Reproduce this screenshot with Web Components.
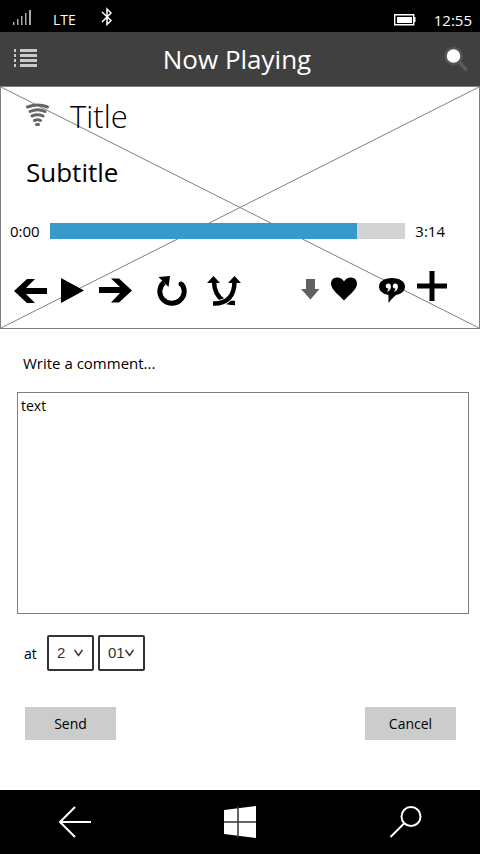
<!DOCTYPE html>
<html lang="en">
<head>
<meta charset="utf-8">
<meta name="viewport" content="width=device-width, initial-scale=1">
<title>Now Playing</title>
<style>
html, body { margin: 0; height: 100%; background: #fff; }
body { font-family: "Open Sans", "Noto Sans", sans-serif; font-size: 14px; line-height: 20px; color: #000; }
</style>
</head>
<body>
<phone-screen>
  <status-bar slot="top" network="LTE" time="12:55"></status-bar>
  <app-header slot="top">Now Playing</app-header>
  <media-player elapsed="0:00" total="3:14" value="307" max="355">
    <span slot="title">Title</span>
    <span slot="subtitle">Subtitle</span>
  </media-player>
  <comment-form></comment-form>
  <nav-bar slot="bottom"></nav-bar>
</phone-screen>
<script>
const define = (name, html, setup) => customElements.define(name, class extends HTMLElement {
  constructor() {
    super();
    this.attachShadow({ mode: 'open' }).innerHTML =
      '<style>*{box-sizing:border-box}svg{display:block}button{margin:0;padding:0;border:0;background:none;font:inherit;color:inherit;display:block}</style>' + html;
  }
  connectedCallback() { if (setup) setup(this, this.shadowRoot); }
});

define('phone-screen', `
<style>
:host { display: flex; flex-direction: column; min-height: 100vh; }
main { flex: 1; display: flex; flex-direction: column; }
</style>
<slot name="top"></slot><main><slot></slot></main><slot name="bottom"></slot>`);

define('status-bar', `
<style>
:host { display: block; background: #000; color: #fff; }
.bar { display: flex; justify-content: space-between; height: 32px; padding: 0 8px 0 12px; }
.group { display: flex; align-items: center; gap: 21px; }
.end { gap: 18px; }
.text { padding-top: 7px; line-height: 20px; }
.time { font-size: 15px; }
.bt { margin-left: 4px; }
</style>
<div class="bar">
  <div class="group">
    <svg width="20" height="32" viewBox="0 0 20 32" fill="#aaa"><path d="M1 22h1.500v3H1zM5 19h1.500v6H5zM9 16h1.500v9H9zM13 13h1.500v12H13zM17 10h2v15h-2z"/></svg>
    <span class="text net"></span>
    <svg class="bt" width="12" height="32" viewBox="0 0 12 32" fill="none" stroke="#fff" stroke-width="1.500"><path d="M1 12l9 8.500-4 4V9l4 4-9 9"/></svg>
  </div>
  <div class="group end">
    <svg width="22" height="32" viewBox="0 0 22 32"><path d="M.7 14.700h19v10h-19z" fill="none" stroke="#fff" stroke-width="1.400"/><path d="M3 17h15v6H3zM20 17h1.500v5H20z" fill="#fff"/></svg>
    <span class="text time"></span>
  </div>
</div>`, (el, root) => {
  root.querySelector('.net').textContent = el.getAttribute('network');
  root.querySelector('.time').textContent = el.getAttribute('time');
});

define('app-header', `
<style>
:host { display: block; background: #404040; color: #fff; }
header { display: flex; align-items: center; justify-content: space-between; height: 54px; padding: 0 11px 0 13px; }
h1 { margin: 0; font-size: 26px; font-weight: 400; line-height: 34px; }
.search { padding-left: 8px; }
</style>
<header>
  <button aria-label="Menu"><svg width="25" height="22" viewBox="0 0 25 22" fill="#c8cac8"><path d="M1 1h2v3H1zM7 1h17v3H7zM1 6h2v3H1zM7 6h17v3H7zM1 11h2v3H1zM7 11h17v3H7zM1 16h2v3H1zM7 16h17v3H7z"/></svg></button>
  <h1><slot></slot></h1>
  <button class="search" aria-label="Search"><svg width="25" height="26" viewBox="0 0 25 26"><path d="M14.500 15.500l7 7.500" stroke="#5a5a5a" stroke-width="4" stroke-linecap="round"/><circle cx="9.500" cy="10" r="8" fill="#fff" stroke="#565656" stroke-width="2.500"/></svg></button>
</header>`);

define('icon-button', `
<style>:host { display: block; } button { height: 36px; }</style>
<button></button>`, (el, root) => {
  const icons = {
    back: [33, '<path d="M0 20L13 8h8l-9 9h21v6H12l9 9h-8z"/>'],
    play: [24, '<path d="M0 7l23 12.500L0 32z"/>'],
    next: [33, '<path d="M33 19.500L20 7.500h-8l9 8.500H0v6h21l-9 9.500h8z"/>'],
    repeat: [30, '<path d="M7 11.500A12.200 11.800 0 1 0 24.500 13" fill="none" stroke="#000" stroke-width="5"/><path d="M1.500 6L13 5l-1.500 11z"/><circle cx="24" cy="13" r="2.500"/>'],
    shuffle: [34, '<path d="M7 10Q7 24 17 30Q20 32 28 32" fill="none" stroke="#000" stroke-width="4.500"/><path d="M6 32.500Q27.500 33 27.500 10" fill="none" stroke="#fff" stroke-width="6.500"/><path d="M6 32.500Q27.500 33 27.500 10" fill="none" stroke="#000" stroke-width="4.500"/><path d="M0 12l6.500-7 6.500 7zM21 12l6.500-7 6.500 7z"/>'],
    download: [19, '<path d="M5 8h9v10h4.500L9.500 28.500 0 18h5z" fill="#5f5f64"/>'],
    like: [27, '<path d="M13 29.500C9 25 0 19 0 12.500C0 5 10 4.500 13 10.500C16 4.500 26 5 26 12.500C26 19 17 25 13 29.500z"/>'],
    comment: [27, '<path d="M13 7C5.500 7 0 10.500 0 15.500c0 4.500 4 7.500 9.500 8.500V32c2.500-3 4.500-5.500 7.500-8 5.500-1 9-4 9-8.500C26 10.500 20.500 7 13 7z"/><g fill="#fff"><circle cx="9.300" cy="15" r="2.500"/><circle cx="16.300" cy="15" r="2.500"/><path d="M11.800 15q.500 4.500-4 6 2-2.500 1.500-4zM18.800 15q.500 4.500-4 6 2-2.500 1.500-4z"/></g>'],
    add: [30, '<path d="M12.500 0h5v12.500H30v5H17.500V30h-5V17.500H0v-5h12.500z"/>']
  };
  const [w, art] = icons[el.getAttribute('name')];
  const b = root.querySelector('button');
  b.setAttribute('aria-label', el.getAttribute('name'));
  b.innerHTML = `<svg width="${w}" height="36" viewBox="0 0 ${w} 36">${art}</svg>`;
});

define('media-player', `
<style>
:host { display: grid; border: 1px solid #7f7f7f; }
.cross { grid-area: 1/1; width: 100%; height: 100%; min-height: 0; contain: size; }
.content { grid-area: 1/1; position: relative; padding: 8px 32px 21px 9px; }
.heading { display: flex; align-items: center; gap: 20px; padding-left: 16px; }
h2, h3 { margin: 0; font-weight: 400; }
h2 { font-size: 31px; line-height: 42px; font-weight: 300; }
h3 { font-size: 26px; line-height: 34px; padding: 18px 0 0 16px; }
.time { display: flex; align-items: center; gap: 10px; padding: 32px 2px 0 0; font-size: 15px; }
.track { flex: 1; height: 16px; background: #d3d3d3; }
.fill { height: 100%; background: #3799cc; }
.row, .set { display: flex; }
.row { justify-content: space-between; padding: 30px 0 0 4px; }
</style>
<svg class="cross" viewBox="0 0 100 100" preserveAspectRatio="none" stroke="#808080"><path d="M0 0L100 100M100 0L0 100" vector-effect="non-scaling-stroke"/></svg>
<div class="content">
  <div class="heading">
    <svg width="24" height="26" viewBox="0 0 24 26" fill="none" stroke="#666" stroke-width="3" stroke-linecap="round"><path d="M1.500 4Q12 0 21.500 4M4 8.500Q12 5 19 8.500M6 13Q12 10.500 17 13M8.500 17.500Q12 16 14.500 17.500M10.500 21.500h2"/></svg>
    <h2><slot name="title"></slot></h2>
  </div>
  <h3><slot name="subtitle"></slot></h3>
  <div class="time"><span class="elapsed"></span><div class="track" role="progressbar" aria-label="Playback"><div class="fill"></div></div><span class="total"></span></div>
  <div class="row">
    <div class="set" style="gap:25px">
      <div class="set" style="gap:14px"><icon-button name="back"></icon-button><icon-button name="play"></icon-button><icon-button name="next"></icon-button></div>
      <div class="set" style="gap:20px"><icon-button name="repeat"></icon-button><icon-button name="shuffle"></icon-button></div>
    </div>
    <div class="set" style="gap:21px">
      <div class="set" style="gap:11px"><icon-button name="download"></icon-button><icon-button name="like"></icon-button></div>
      <div class="set" style="gap:11px"><icon-button name="comment"></icon-button><icon-button name="add"></icon-button></div>
    </div>
  </div>
</div>`, (el, root) => {
  root.querySelector('.elapsed').textContent = el.getAttribute('elapsed');
  root.querySelector('.total').textContent = el.getAttribute('total');
  root.querySelector('.fill').style.width = el.getAttribute('value') / el.getAttribute('max') * 100 + '%';
});

define('number-select', `
<style>
:host { display: grid; width: 47px; height: 36px; }
select { grid-area: 1/1; appearance: none; margin: 0; padding: 0 0 0 8px; width: 100%; height: 100%; border: 2px solid #333; border-radius: 2px; background: #fff; color: #333; font: 15px/20px "Liberation Sans", sans-serif; }
svg { grid-area: 1/1; place-self: center end; margin-right: 11px; position: relative; pointer-events: none; }
</style>
<select></select>
<svg width="9" height="8" viewBox="0 0 9 8" fill="none" stroke="#333" stroke-width="1.500"><path d="M.500 1l4 5.500 4-5.500"/></svg>`, (el, root) => {
  const s = root.querySelector('select');
  s.setAttribute('aria-label', el.getAttribute('label'));
  s.add(new Option(el.getAttribute('value')));
});

define('grey-button', `
<style>button { width: 91px; height: 33px; background: #ccc; font-weight: 500; } :host { display: block; }</style>
<button type="button"><slot></slot></button>`);

define('comment-form', `
<style>
:host { display: block; padding: 24px 11px 49px 17px; }
.caption { display: block; padding-left: 6px; font-size: 15px; }
textarea { display: block; width: 100%; height: 222px; margin: 19px 0 0; padding: 3px; border: 1px solid #7f7f7f; border-radius: 0; resize: none; font: inherit; color: inherit; outline: 0; }
.at { display: flex; align-items: center; gap: 4px; padding: 21px 0 0 7px; }
.at span { width: 19px; padding-top: 2px; }
.actions { display: flex; justify-content: space-between; padding: 36px 13px 0 8px; }
</style>
<form>
  <label class="caption" for="comment">Write a comment...</label>
  <textarea id="comment">text</textarea>
  <div class="at"><span>at</span><number-select label="Minutes" value="2"></number-select><number-select label="Seconds" value="01"></number-select></div>
  <div class="actions"><grey-button>Send</grey-button><grey-button>Cancel</grey-button></div>
</form>`);

define('nav-bar', `
<style>
:host { display: block; background: #000; }
nav { display: flex; justify-content: space-between; align-items: center; height: 64px; padding: 0 58px; }
</style>
<nav>
  <button aria-label="Back"><svg width="33" height="34" viewBox="0 0 33 34" fill="none" stroke="#fff" stroke-width="2"><path d="M17 2L2 17l15 15M2 17h31"/></svg></button>
  <button aria-label="Start"><svg width="33" height="32" viewBox="0 0 33 32" fill="#fff"><path d="M0 4L32 0v32L0 28z"/><path d="M14 0v32M0 16h32" stroke="#333" stroke-width="1.500"/></svg></button>
  <button aria-label="Search"><svg width="33" height="34" viewBox="0 0 33 34" fill="none" stroke="#fff" stroke-width="2"><circle cx="22" cy="11.500" r="9.500"/><path d="M15.500 18L1.500 32"/></svg></button>
</nav>`);
</script>
</body>
</html>
